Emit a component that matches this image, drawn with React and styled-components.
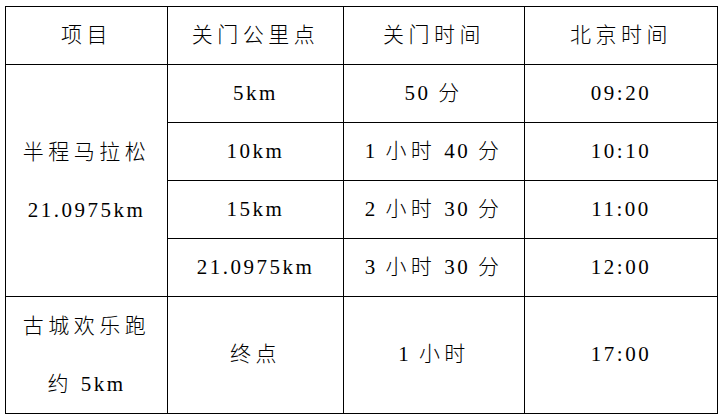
import React from 'react';
import styled, { createGlobalStyle } from 'styled-components';

const GlobalStyle = createGlobalStyle`
  body {
    margin: 0;
    background: #fff;
  }
`;

const Page = styled.div`
  padding: 6px 0 0 5px;
`;

const Table = styled.table`
  border-collapse: collapse;
  table-layout: fixed;
  width: 713px;
  font-family: 'Liberation Serif', 'Noto Sans CJK SC', serif;
  font-size: 21px;
  color: #000;
`;

const Cell = styled.td`
  border: 1.5px solid #000;
  height: ${(p) => p.$h || 57}px;
  padding: 0;
  text-align: center;
  vertical-align: middle;
  letter-spacing: 2.5px;
  line-height: 1.2;
  font-weight: 300;
`;

const Line = styled.div`
  line-height: 58px;
`;

// chinese characters get a wider spacing, like the document grid
const Han = styled.span`
  letter-spacing: 4.5px;
`;

// split a string into runs of chinese / latin so each gets its spacing
const Text = ({ children }) =>
  children.split(/([\u4e00-\u9fff]+)/).map((part, i) =>
    /[\u4e00-\u9fff]/.test(part) ? <Han key={i}>{part}</Han> : part
  );

const widths = [162, 176, 181, 193];
const header = ['项目', '关门公里点', '关门时间', '北京时间'];

// 半程马拉松 rows
const halfRows = [
  ['5km', '50 分', '09:20'],
  ['10km', '1 小时 40 分', '10:10'],
  ['15km', '2 小时 30 分', '11:00'],
  ['21.0975km', '3 小时 30 分', '12:00']
];

const App = () => {
  return (
    <>
      <GlobalStyle />
      <Page>
        <Table>
          <colgroup>
            {widths.map((w, i) => (
              <col key={i} style={{ width: w }} />
            ))}
          </colgroup>
          <tbody>
            <tr>
              {header.map((h) => (
                <Cell as="th" key={h}>
                  <Text>{h}</Text>
                </Cell>
              ))}
            </tr>
            {halfRows.map((row, i) => (
              <tr key={row[0]}>
                {i === 0 ? (
                  <Cell rowSpan={4}>
                    <Line>
                      <Text>半程马拉松</Text>
                    </Line>
                    <Line>21.0975km</Line>
                  </Cell>
                ) : null}
                {row.map((v) => (
                  <Cell key={v}>
                    <Text>{v}</Text>
                  </Cell>
                ))}
              </tr>
            ))}
            <tr>
              <Cell $h={114}>
                <Line>
                  <Text>古城欢乐跑</Text>
                </Line>
                <Line>
                  <Text>约 5km</Text>
                </Line>
              </Cell>
              <Cell $h={114}>
                <Text>终点</Text>
              </Cell>
              <Cell $h={114}>
                <Text>1 小时</Text>
              </Cell>
              <Cell $h={114}>17:00</Cell>
            </tr>
          </tbody>
        </Table>
      </Page>
    </>
  );
};

export default App;
